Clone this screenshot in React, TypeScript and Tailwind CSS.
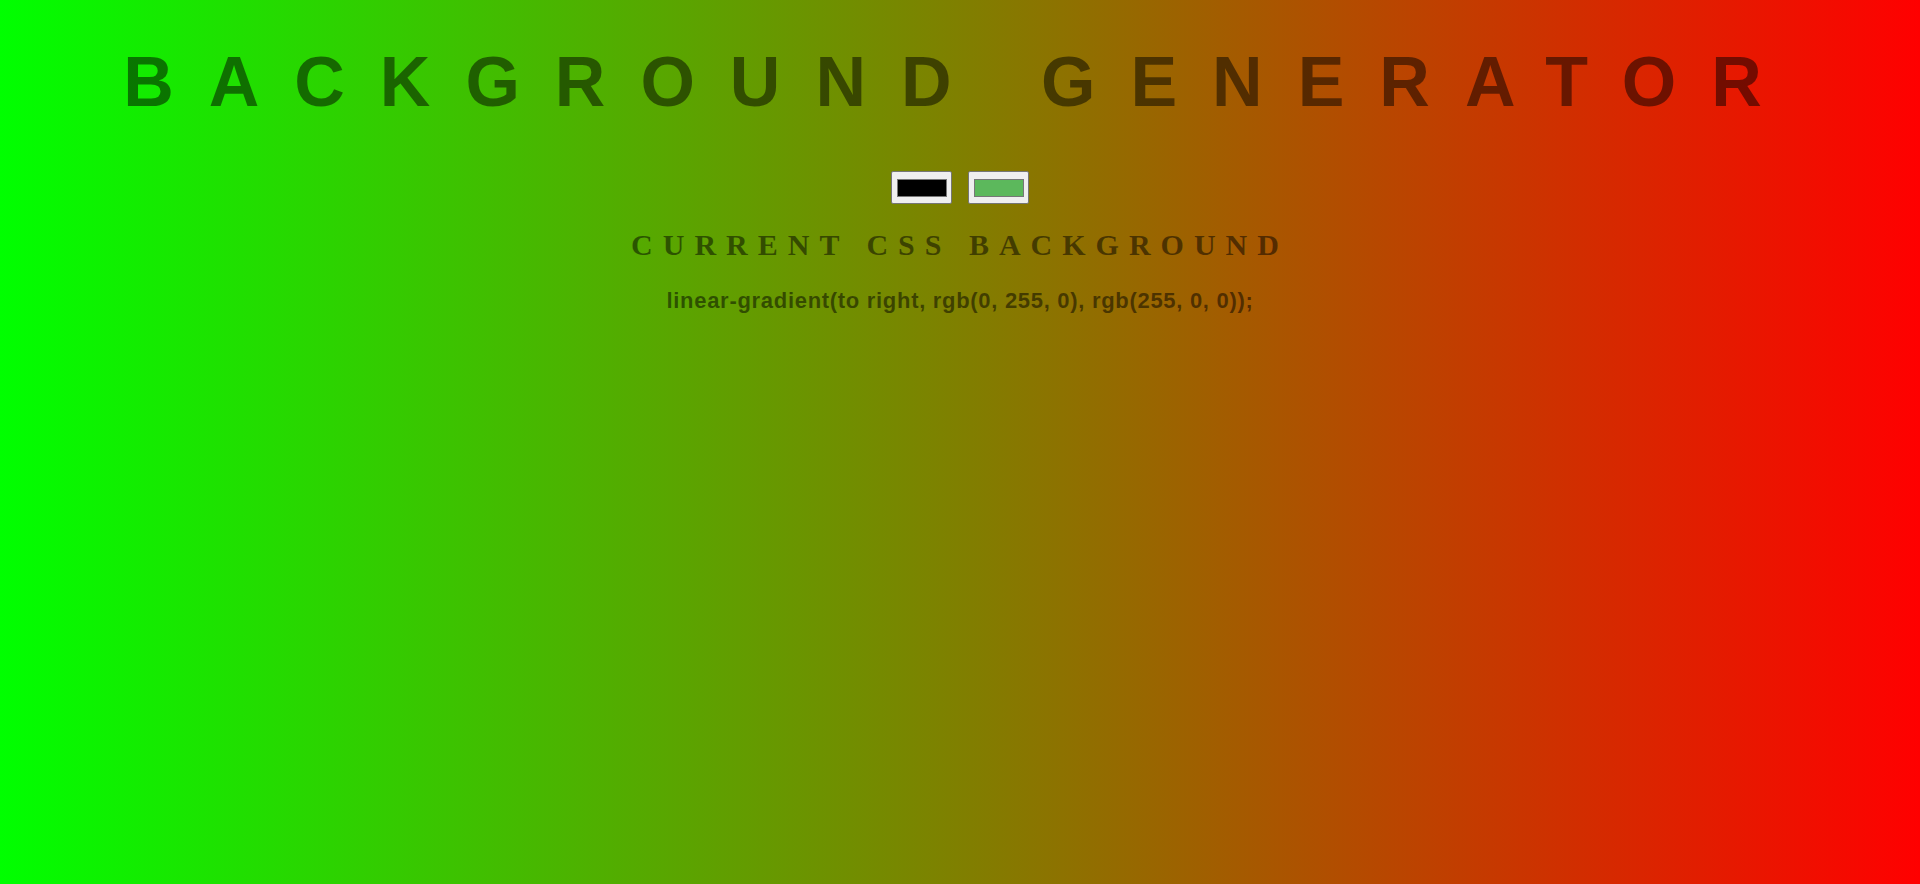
import React from 'react';

const swatches = ['#000000', '#5cb85c'];

const ColorInput = ({ color }: { color: string }) => (
  <div className="flex h-[33px] w-[61px] items-center justify-center rounded-[2px] border border-[#767676] bg-[#efefef]">
    <div className="h-[18px] w-[50px] border border-[#777777]" style={{ backgroundColor: color }} />
  </div>
);

const App = () => {
  return (
    <div className="min-h-screen w-full bg-[linear-gradient(to_right,rgb(0,255,0),rgb(255,0,0))] pt-[42px] text-black/50">
      <h1 className="text-center font-['Liberation_Sans',Arial,sans-serif] text-[70px] font-bold leading-[80px] tracking-[35px]">
        BACKGROUND GENERATOR
      </h1>

      <div className="mt-[49px] flex justify-center gap-[16px]">
        {swatches.map((c) => (
          <ColorInput key={c} color={c} />
        ))}
      </div>

      <h3 className="mt-[24px] text-center font-['Liberation_Serif','Times_New_Roman',serif] text-[30px] font-bold leading-[34px] tracking-[10px]">
        CURRENT CSS BACKGROUND
      </h3>

      <p className="mt-[26px] text-center font-['Liberation_Sans',Arial,sans-serif] text-[22px] font-bold leading-[25px] tracking-[0.7px]">
        linear-gradient(to right, rgb(0, 255, 0), rgb(255, 0, 0));
      </p>
    </div>
  );
};

export default App;
